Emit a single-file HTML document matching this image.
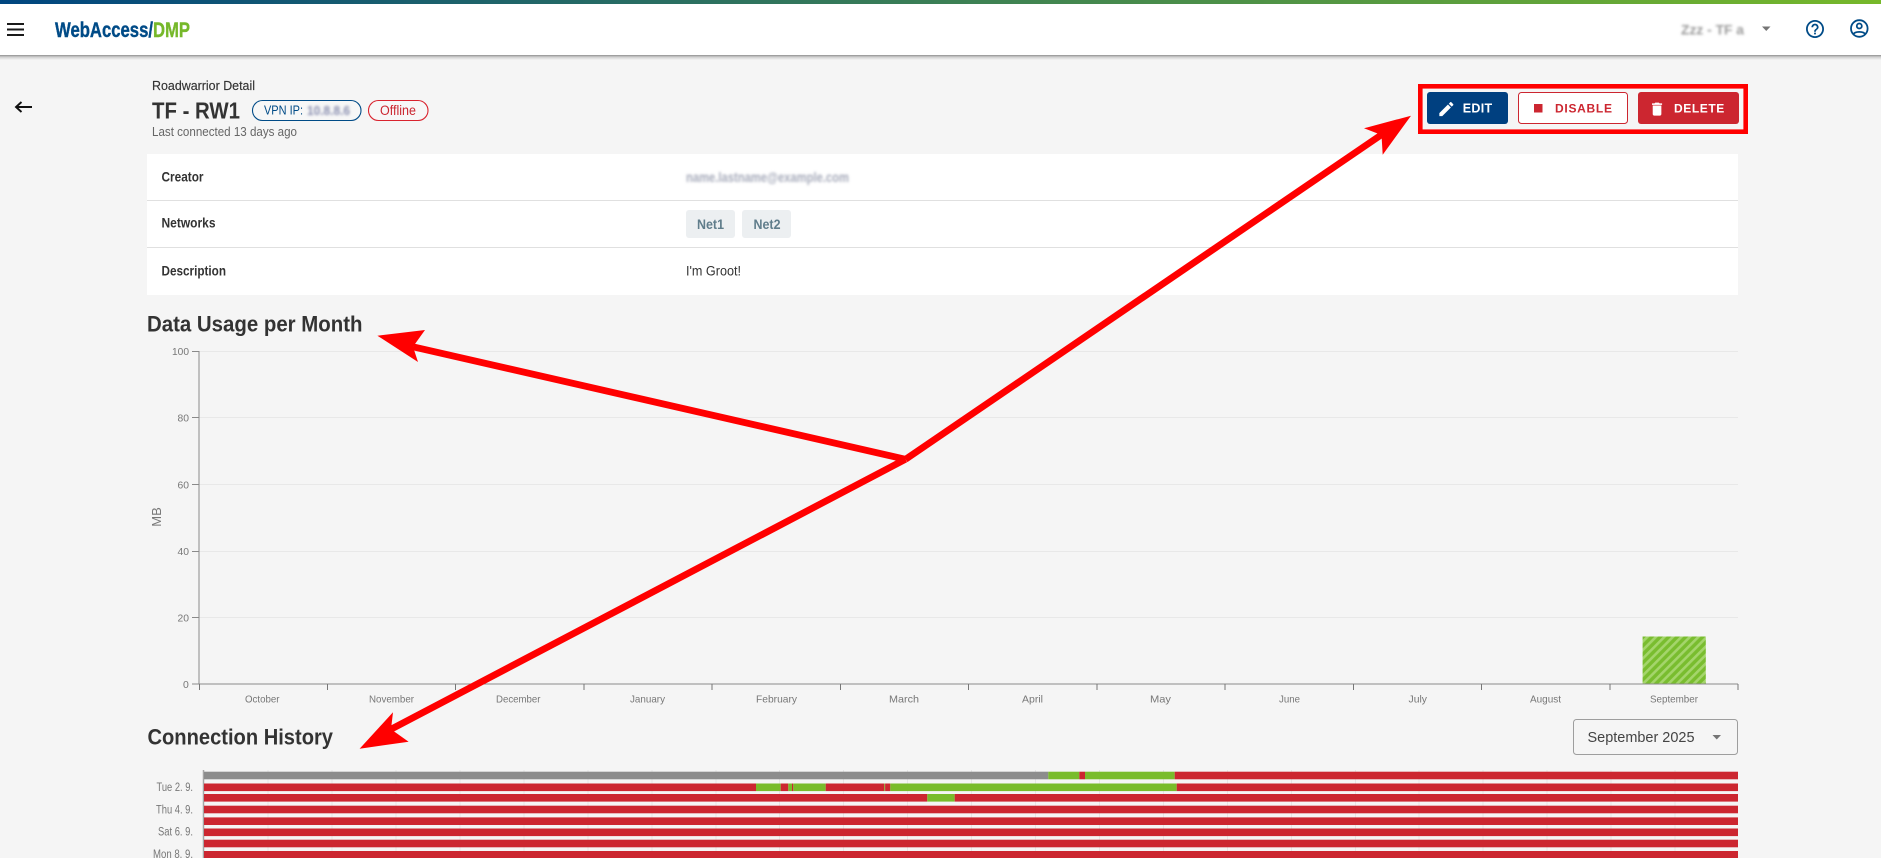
<!DOCTYPE html>
<html lang="en">
<head>
<meta charset="utf-8">
<title>Roadwarrior Detail</title>
<style>
html,body{margin:0;padding:0;width:1881px;height:858px;overflow:hidden;background:#f5f5f5}
svg{display:block;font-family:"Liberation Sans",Arial,sans-serif}
</style>
</head>
<body>
<svg width="1881" height="858" viewBox="0 0 1881 858" xmlns="http://www.w3.org/2000/svg">
<defs>
<linearGradient id="top" x1="0" x2="1" y1="0" y2="0"><stop offset="0" stop-color="#004680"/><stop offset="1" stop-color="#76b82a"/></linearGradient>
<linearGradient id="sh" x1="0" x2="0" y1="0" y2="1"><stop offset="0" stop-color="#8f8f8f"/><stop offset=".4" stop-color="#cfcfcf"/><stop offset="1" stop-color="#f4f4f4"/></linearGradient>
<pattern id="stripe" width="6" height="6" patternUnits="userSpaceOnUse" patternTransform="rotate(45)"><rect width="6" height="6" fill="#79bd2f"/><rect width="2.6" height="6" fill="#a4d56b"/></pattern>
<filter id="b1" x="-10%" y="-50%" width="120%" height="200%"><feGaussianBlur stdDeviation="1.3"/></filter>
</defs>

<rect width="1881" height="858" fill="#f5f5f5"/>
<!-- header -->
<rect y="55" width="1881" height="5" fill="url(#sh)"/>
<rect width="1881" height="55" fill="#fff"/>
<rect width="1881" height="4" fill="url(#top)"/>
<path d="M7 23h17v2H7zM7 28.500h17v2H7zM7 34h17v2H7z" fill="#1a1a1a"/>
<g stroke-width=".4">
<text x="55" y="37" font-size="21" font-weight="700" fill="#004b87" stroke="#004b87" textLength="98" lengthAdjust="spacingAndGlyphs">WebAccess/</text>
<text x="153" y="37" font-size="21" font-weight="700" fill="#76b82a" stroke="#76b82a" textLength="37" lengthAdjust="spacingAndGlyphs">DMP</text>
</g>
<text x="1681" y="34.500" font-size="14" font-weight="700" fill="#9a9a9a" filter="url(#b1)" textLength="63" lengthAdjust="spacingAndGlyphs">Zzz - TF a</text>
<path d="M1762 26.500h8.500l-4.250 4.500z" fill="#757575"/>
<path transform="translate(1804.200 18.200) scale(.9)" fill="#004b87" d="M11 18h2v-2h-2v2zm1-16C6.480 2 2 6.480 2 12s4.480 10 10 10 10-4.480 10-10S17.520 2 12 2zm0 18c-4.410 0-8-3.590-8-8s3.590-8 8-8 8 3.590 8 8-3.590 8-8 8zm0-14c-2.210 0-4 1.790-4 4h2c0-1.100.9-2 2-2s2 .9 2 2c0 2-3 1.750-3 5h2c0-2.250 3-2.500 3-5 0-2.210-1.790-4-4-4z"/>
<g fill="none" stroke="#004b87" stroke-width="1.800">
<circle cx="1859.300" cy="28.500" r="8.300"/>
<circle cx="1859.300" cy="26" r="2.500"/>
<path d="M1853.300 34.500c1.500-3.500 10.500-3.500 12 0"/>
</g>

<!-- back arrow -->
<path d="M32 107H16.500M21.500 102L16 107l5.500 5" fill="none" stroke="#111" stroke-width="1.900"/>

<!-- title area -->
<text x="152" y="90" font-size="13" fill="#333" stroke="#333" stroke-width=".15" textLength="103" lengthAdjust="spacingAndGlyphs">Roadwarrior Detail</text>
<text x="152" y="118.500" font-size="23" font-weight="700" fill="#333" textLength="88" lengthAdjust="spacingAndGlyphs">TF - RW1</text>
<text x="152" y="136" font-size="12.500" fill="#666" textLength="145" lengthAdjust="spacingAndGlyphs">Last connected 13 days ago</text>
<rect x="252.500" y="100.500" width="108.500" height="20" rx="10" fill="#f7f7f7" stroke="#004b87" stroke-width="1.100"/>
<text x="264" y="114.500" font-size="12.500" fill="#004b87" textLength="39" lengthAdjust="spacingAndGlyphs">VPN IP:</text>
<text x="307" y="115" font-size="13" font-weight="700" fill="#8a8fb0" filter="url(#b1)" textLength="43" lengthAdjust="spacingAndGlyphs">10.8.8.6</text>
<rect x="368.500" y="100.500" width="59.500" height="20" rx="10" fill="#f7f7f7" stroke="#d9232e" stroke-width="1.100"/>
<text x="380" y="115" font-size="13.500" fill="#cb2630" textLength="36" lengthAdjust="spacingAndGlyphs">Offline</text>

<!-- buttons -->
<rect x="1420.300" y="86.300" width="325.400" height="45.400" fill="none" stroke="#ff0000" stroke-width="4.600"/>
<rect x="1427" y="92" width="81" height="32" rx="3" fill="#004080"/>
<path transform="translate(1437 99.700) scale(.78)" fill="#fff" d="M3 17.250V21h3.750L17.810 9.940l-3.750-3.750L3 17.250zM20.710 7.040c.39-.39.39-1.020 0-1.410l-2.340-2.340c-.39-.39-1.020-.39-1.410 0l-1.830 1.830 3.750 3.750 1.830-1.830z"/>
<text x="1462.700" y="112.300" font-size="12.500" font-weight="700" fill="#fff" textLength="29.500" lengthAdjust="spacing">EDIT</text>
<rect x="1518.500" y="92.500" width="109" height="31" rx="3" fill="#fff" stroke="#cc2630"/>
<rect x="1534" y="104" width="8.500" height="8.500" fill="#cc2630"/>
<text x="1555" y="112.300" font-size="12" font-weight="700" fill="#cc2630" textLength="57" lengthAdjust="spacing">DISABLE</text>
<rect x="1638" y="92" width="101" height="32" rx="3" fill="#cc2630"/>
<path transform="translate(1648.400 100.500) scale(.72)" fill="#fff" d="M6 19c0 1.100.9 2 2 2h8c1.100 0 2-.9 2-2V7H6v12zM19 4h-3.500l-1-1h-5l-1 1H5v2h14V4z"/>
<text x="1674" y="112.300" font-size="12" font-weight="700" fill="#fff" textLength="50.300" lengthAdjust="spacing">DELETE</text>

<!-- table -->
<rect x="147" y="154" width="1591" height="141" fill="#fff"/>
<rect x="147" y="200" width="1591" height="1" fill="#e0e0e0"/>
<rect x="147" y="247" width="1591" height="1" fill="#e0e0e0"/>
<text x="161.500" y="181.500" font-size="13.500" font-weight="700" fill="#333" textLength="42" lengthAdjust="spacingAndGlyphs">Creator</text>
<text x="161.500" y="227.500" font-size="13.500" font-weight="700" fill="#333" textLength="54" lengthAdjust="spacingAndGlyphs">Networks</text>
<text x="161.500" y="275.500" font-size="13.500" font-weight="700" fill="#333" textLength="64.500" lengthAdjust="spacingAndGlyphs">Description</text>
<text x="686" y="182" font-size="14" font-weight="700" fill="#a6aaba" filter="url(#b1)" textLength="163" lengthAdjust="spacingAndGlyphs">name.lastname@example.com</text>
<rect x="686" y="210" width="49" height="28" rx="3" fill="#eceff1"/>
<text x="697" y="229" font-size="13.500" font-weight="700" fill="#607d8b" textLength="27" lengthAdjust="spacingAndGlyphs">Net1</text>
<rect x="742" y="210" width="49" height="28" rx="3" fill="#eceff1"/>
<text x="753.500" y="229" font-size="13.500" font-weight="700" fill="#607d8b" textLength="27" lengthAdjust="spacingAndGlyphs">Net2</text>
<text x="686" y="275.500" font-size="13.500" fill="#333" textLength="55" lengthAdjust="spacingAndGlyphs">I'm Groot!</text>

<!-- data usage -->
<text x="147" y="331.500" font-size="22" font-weight="700" fill="#333" textLength="215.500" lengthAdjust="spacingAndGlyphs">Data Usage per Month</text>
<path d="M192 351.500h1546M192 417.500h1546M192 484.500h1546M192 551.500h1546M192 617.500h1546" stroke="#e8e8e8" fill="none"/>
<g font-size="10.500" fill="#777">
<text x="172" y="355" textLength="17" lengthAdjust="spacingAndGlyphs">100</text>
<text x="177.500" y="421.500" textLength="11.500" lengthAdjust="spacingAndGlyphs">80</text>
<text x="177.500" y="488.500" textLength="11.500" lengthAdjust="spacingAndGlyphs">60</text>
<text x="177.500" y="555" textLength="11.500" lengthAdjust="spacingAndGlyphs">40</text>
<text x="177.500" y="621.500" textLength="11.500" lengthAdjust="spacingAndGlyphs">20</text>
<text x="183" y="688" textLength="5.800" lengthAdjust="spacingAndGlyphs">0</text>
</g>
<text transform="translate(161 517) rotate(-90)" text-anchor="middle" font-size="13" fill="#777">MB</text>
<rect x="1642.600" y="636.500" width="63.200" height="47" fill="url(#stripe)"/>
<path d="M199 351v333M192 351.500h7M192 417.500h7M192 484.500h7M192 551.500h7M192 617.500h7M192 684h1546" stroke="#8a8a8a" fill="none"/>
<path d="M199.500 684v6M327.500 684v6M455.500 684v6M584 684v6M712 684v6M840.500 684v6M968.500 684v6M1097 684v6M1225 684v6M1353.500 684v6M1481.500 684v6M1610 684v6M1738 684v6" stroke="#777" fill="none"/>
<g font-size="10.500" fill="#777">
<text x="245" y="702.500" textLength="34.500" lengthAdjust="spacingAndGlyphs">October</text>
<text x="369" y="702.500" textLength="45" lengthAdjust="spacingAndGlyphs">November</text>
<text x="496" y="702.500" textLength="44.500" lengthAdjust="spacingAndGlyphs">December</text>
<text x="630" y="702.500" textLength="35" lengthAdjust="spacingAndGlyphs">January</text>
<text x="756" y="702.500" textLength="41" lengthAdjust="spacingAndGlyphs">February</text>
<text x="889" y="702.500" textLength="30" lengthAdjust="spacingAndGlyphs">March</text>
<text x="1022" y="702.500" textLength="21" lengthAdjust="spacingAndGlyphs">April</text>
<text x="1150" y="702.500" textLength="21" lengthAdjust="spacingAndGlyphs">May</text>
<text x="1279" y="702.500" textLength="21" lengthAdjust="spacingAndGlyphs">June</text>
<text x="1408.500" y="702.500" textLength="18.500" lengthAdjust="spacingAndGlyphs">July</text>
<text x="1530" y="702.500" textLength="31" lengthAdjust="spacingAndGlyphs">August</text>
<text x="1650" y="702.500" textLength="48" lengthAdjust="spacingAndGlyphs">September</text>
</g>

<!-- connection history -->
<text x="147.500" y="744.500" font-size="22" font-weight="700" fill="#333" textLength="185.500" lengthAdjust="spacingAndGlyphs">Connection History</text>
<rect x="1573.500" y="719.500" width="164" height="35" rx="3" fill="#f5f5f5" stroke="#9e9e9e"/>
<text x="1587.500" y="742" font-size="15" fill="#444" textLength="107" lengthAdjust="spacingAndGlyphs">September 2025</text>
<path d="M1712.500 735h8.500l-4.250 4.500z" fill="#757575"/>

<!-- heatmap -->
<path d="M268 770v88M332 770v88M396 770v88M460 770v88M524 770v88M588 770v88M652 770v88M716 770v88M779.500 770v88M843.500 770v88M907.500 770v88M971.500 770v88M1035.500 770v88M1099.500 770v88M1163.500 770v88M1227.500 770v88M1291.500 770v88M1355.500 770v88M1419 770v88M1483 770v88M1547 770v88M1611 770v88M1675 770v88" stroke="#e6e6e6" fill="none"/>
<path d="M203.500 770v88" stroke="#a5a5a5" stroke-width="1.500" fill="none"/>
<g>
<rect x="204" y="771.700" width="844.300" height="7.600" fill="#8c8c8c"/>
<rect x="1048.300" y="771.700" width="31" height="7.600" fill="#79bc2b"/>
<rect x="1079.300" y="771.700" width="5.700" height="7.600" fill="#cc2630"/>
<rect x="1085" y="771.700" width="89.700" height="7.600" fill="#79bc2b"/>
<rect x="1174.700" y="771.700" width="563.300" height="7.600" fill="#cc2630"/>

<rect x="204" y="783.500" width="552" height="7.600" fill="#cc2630"/>
<rect x="756" y="783.500" width="24.700" height="7.600" fill="#79bc2b"/>
<rect x="780.700" y="783.500" width="7.600" height="7.600" fill="#cc2630"/>
<rect x="788.300" y="783.500" width="3.700" height="7.600" fill="#79bc2b"/>
<rect x="792" y="783.500" width="1.300" height="7.600" fill="#cc2630"/>
<rect x="793.300" y="783.500" width="32.400" height="7.600" fill="#79bc2b"/>
<rect x="825.700" y="783.500" width="58.600" height="7.600" fill="#cc2630"/>
<rect x="884.300" y="783.500" width=".8" height="7.600" fill="#79bc2b"/>
<rect x="885.100" y="783.500" width="5.200" height="7.600" fill="#cc2630"/>
<rect x="890.300" y="783.500" width="286.400" height="7.600" fill="#79bc2b"/>
<rect x="1176.700" y="783.500" width="561.300" height="7.600" fill="#cc2630"/>

<rect x="204" y="794" width="723.300" height="7.600" fill="#cc2630"/>
<rect x="927.300" y="794" width="27.400" height="7.600" fill="#79bc2b"/>
<rect x="954.700" y="794" width="783.300" height="7.600" fill="#cc2630"/>

<rect x="204" y="805.700" width="1534" height="7.600" fill="#cc2630"/>
<rect x="204" y="817.400" width="1534" height="7.600" fill="#cc2630"/>
<rect x="204" y="828.500" width="1534" height="7.600" fill="#cc2630"/>
<rect x="204" y="839.700" width="1534" height="7.600" fill="#cc2630"/>
<rect x="204" y="851" width="1534" height="9" fill="#cc2630"/>
</g>
<g font-size="11.500" fill="#777">
<text x="156.500" y="791" textLength="36.500" lengthAdjust="spacingAndGlyphs">Tue 2. 9.</text>
<text x="156" y="813.500" textLength="37" lengthAdjust="spacingAndGlyphs">Thu 4. 9.</text>
<text x="158" y="835.500" textLength="35" lengthAdjust="spacingAndGlyphs">Sat 6. 9.</text>
<text x="153" y="858" textLength="40" lengthAdjust="spacingAndGlyphs">Mon 8. 9.</text>
</g>

<!-- annotation arrows -->
<g fill="#ff0000">
<path d="M905.500 459.300L1384 133" stroke="#ff0000" stroke-width="6.800" fill="none"/>
<path d="M905.500 459.300L413 346.800" stroke="#ff0000" stroke-width="6.800" fill="none"/>
<path d="M905.500 459.300L391 729.300" stroke="#ff0000" stroke-width="6.800" fill="none"/>
<polygon points="1411,115.700 1364,128.300 1381.500,135 1382.700,154.700"/>
<polygon points="377.400,335.700 425,330 413,346.800 418,362"/>
<polygon points="359.600,748.700 393,712.300 391,729.300 408.600,741.700"/>
</g>
</svg>
</body>
</html>
